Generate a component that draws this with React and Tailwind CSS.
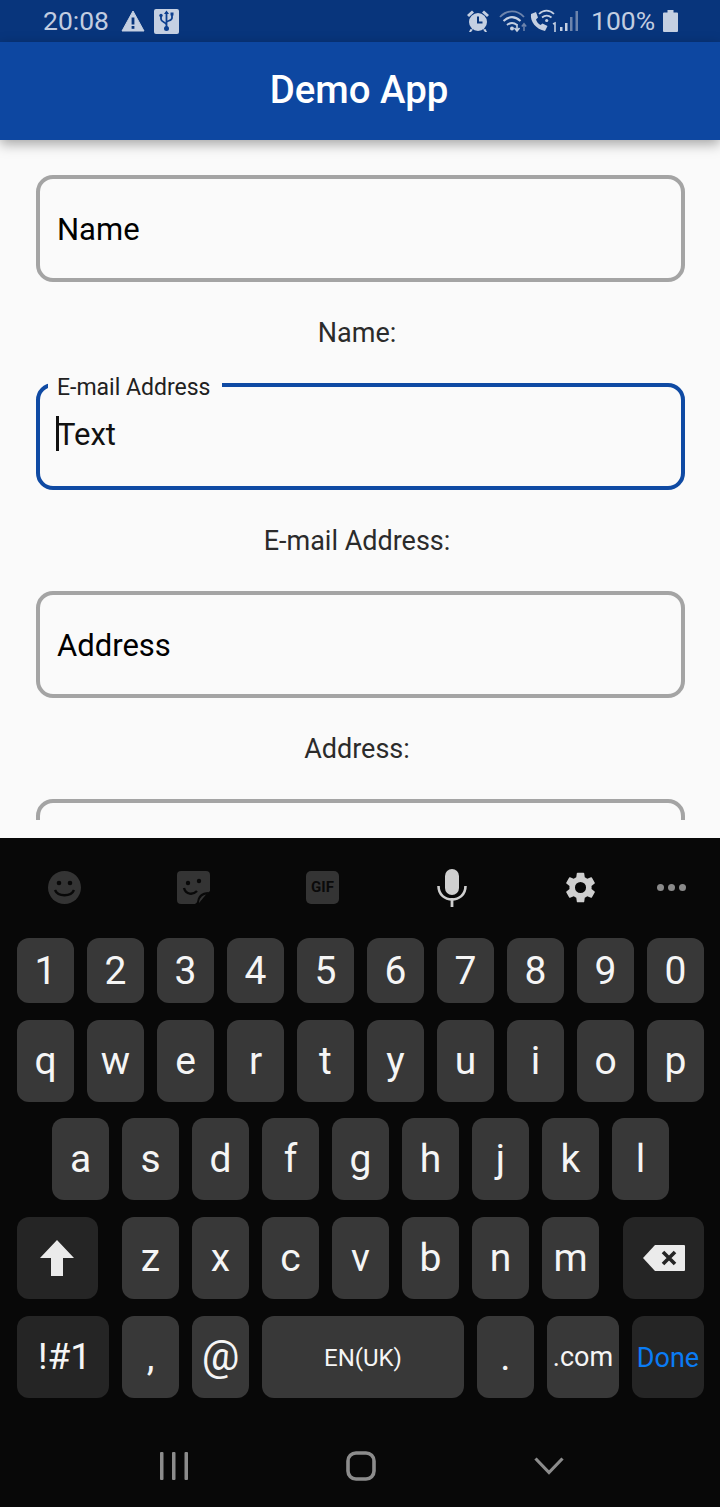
const Field = ({ label, hint }) => (
  <div>
    <div className="h-[107px] border-[4px] border-[#a4a4a4] rounded-[17px] flex items-center pl-[17px] pt-[3px] text-[31px] text-black">{label}</div>
    <div className="h-[101px] flex items-center justify-center pr-[7px] pt-[1px] text-[27px] text-[#2b2b2b]">{hint}</div>
  </div>
);

const FocusedField = () => (
  <div>
    <div className="relative h-[107px] border-[4px] border-[#0f4aa3] rounded-[17px] pl-[17px] pt-[26px] text-[31px] leading-[44px] text-[#111]">
      <span className="absolute left-[8px] -top-[12px] pl-[9px] pr-[12px] bg-[#fafafa] text-[23px] leading-[26px] text-[#212121]">E-mail Address</span>
      <span className="absolute left-[16px] top-[29px] w-[3px] h-[35px] bg-[#111]" />
      Text
    </div>
    <div className="h-[101px] flex items-center justify-center pr-[7px] pt-[1px] text-[27px] text-[#2b2b2b]">E-mail Address:</div>
  </div>
);

const Key = ({ children, className = "w-[57px] bg-[#383838] text-[39px] pt-[1px]" }) => (
  <div className={`h-full rounded-[12px] flex items-center justify-center text-[#f5f5f5] shrink-0 ${className}`}>{children}</div>
);

const Row = ({ keys, className = "pl-[17px]" }) => (
  <div className={`h-[82px] flex gap-[13px] ${className}`}>
    {keys.map(k => <Key key={k}>{k}</Key>)}
  </div>
);

const StatusBar = () => (
  <div className="h-[42px] bg-[#08357c] flex items-center pl-[43px] text-[#c2cde0] text-[26.5px]">
    <span>20:08</span>
    <svg width="24" height="22" viewBox="0 0 24 22" className="ml-[12px]">
      <path d="M12 1 L23 21 H1 Z" fill="#c5d0e2" stroke="#c5d0e2" strokeLinejoin="round" />
      <rect x="10.6" y="7.5" width="2.8" height="7" fill="#08357c" />
      <rect x="10.6" y="16" width="2.8" height="2.8" fill="#08357c" />
    </svg>
    <div className="ml-[9px] w-[25px] h-[25px] bg-[#c5d0e2] rounded-[2px] flex items-center justify-center">
      <svg width="17" height="22" viewBox="0 0 17 22" fill="none" stroke="#0d3f8f" strokeWidth="1.8">
        <path d="M8.5 2 V19 M8.5 15 C8.5 12 3 12.5 3 9 V6 M8.5 12.5 C8.5 10.5 14 11 14 8 V5" />
        <path d="M8.5 0.5 L11 4 H6 Z" fill="#0d3f8f" stroke="none" />
        <circle cx="8.5" cy="18.5" r="2.5" fill="#0d3f8f" stroke="none" />
        <circle cx="3" cy="5.5" r="1.7" fill="#0d3f8f" stroke="none" />
        <rect x="12.5" y="2.5" width="3" height="3" fill="#0d3f8f" stroke="none" />
      </svg>
    </div>
    <svg width="24" height="24" viewBox="0 0 24 24" className="ml-[287px]" fill="#c5d0e2">
      <circle cx="12" cy="13" r="9" />
      <path d="M1 6 L6 1.5 L8 3.5 L3 8 Z M23 6 L18 1.5 L16 3.5 L21 8 Z M4.5 20 L3 23 H5 L7 20.5 Z M19.5 20 L21 23 H19 L17 20.5 Z" />
      <path d="M12 7.5 V13.5 H16.5" stroke="#08357c" strokeWidth="2" fill="none" />
    </svg>
    <svg width="29" height="24" viewBox="0 0 29 24" className="ml-[9px]" fill="none">
      <path d="M1 8 C8 0.5 18 0.5 25 8" stroke="#6d84ac" strokeWidth="1.8" />
      <path d="M4.5 12 C10 7 16 7 21.5 12" stroke="#c5d0e2" strokeWidth="2" />
      <path d="M8 16 C11 13.5 15 13.5 18 16" stroke="#c5d0e2" strokeWidth="2" />
      <circle cx="13" cy="19.5" r="2" fill="#c5d0e2" />
      <path d="M18 15 V21 M15.5 19 L18 22 L20.5 19" stroke="#c5d0e2" strokeWidth="1.6" />
      <path d="M25 22 V15 M22.8 17.5 L25 14.8 L27.2 17.5" stroke="#6d84ac" strokeWidth="1.5" />
    </svg>
    <svg width="29" height="24" viewBox="0 0 29 24" className="ml-[1px]" fill="none">
      <path d="M2 5 C1 13 7 20 16 22 L18.5 17 L13.5 14.5 L11.5 16 C9.5 15 7.5 12.5 7 10.5 L9 8.5 L7 3 Z" fill="#c5d0e2" />
      <path d="M10 5 C14.5 0.5 20.5 0.5 25 5" stroke="#c5d0e2" strokeWidth="1.7" />
      <path d="M13 8.5 C16 6 19.5 6 22.5 8.5" stroke="#c5d0e2" strokeWidth="1.7" />
      <circle cx="17.7" cy="11.5" r="1.6" fill="#c5d0e2" />
      <path d="M24 15 L26 14 V23" stroke="#c5d0e2" strokeWidth="1.6" />
    </svg>
    <svg width="21" height="22" viewBox="0 0 21 22" className="ml-[1px]">
      <rect x="1" y="17" width="2.5" height="4" fill="#c5d0e2" />
      <rect x="6" y="13" width="2.5" height="8" fill="#c5d0e2" />
      <rect x="11" y="7" width="2.5" height="14" fill="#6d84ac" />
      <rect x="16.5" y="1" width="2.5" height="20" fill="#6d84ac" />
    </svg>
    <span className="ml-[11px]">100%</span>
    <svg width="15" height="22" viewBox="0 0 15 22" className="ml-[8px]">
      <path d="M4.5 0 H10.5 V2.5 H14 a1 1 0 0 1 1 1 V21 a1 1 0 0 1 -1 1 H1 a1 1 0 0 1 -1 -1 V3.5 a1 1 0 0 1 1 -1 H4.5 Z" fill="#c5d0e2" />
    </svg>
  </div>
);

const Toolbar = () => (
  <div className="h-[100px] flex items-center pb-[1px] pl-[48px]">
    <svg width="33" height="33" viewBox="0 0 33 33" fill="none">
      <ellipse cx="16.5" cy="16.5" rx="16.5" ry="16.5" fill="#343434" />
      <circle cx="11" cy="12" r="2.3" fill="#080808" />
      <circle cx="22" cy="12" r="2.3" fill="#080808" />
      <path d="M7 19 C10 26 23 26 26 19" stroke="#080808" strokeWidth="2.4" />
    </svg>
    <svg width="33" height="33" viewBox="0 0 33 33" fill="none" className="ml-[96px]">
      <path d="M4 0 H29 a4 4 0 0 1 4 4 V20 L18 33 H4 a4 4 0 0 1 -4 -4 V4 a4 4 0 0 1 4 -4 Z" fill="#343434" />
      <circle cx="11" cy="12" r="2.2" fill="#080808" />
      <circle cx="22" cy="10" r="2.2" fill="#080808" />
      <path d="M7 17 C9 24 16 24 20 20" stroke="#080808" strokeWidth="2.4" />
      <path d="M20 33 C20 25 24 21 32 21 Z" fill="#080808" />
      <path d="M22 32 C22 28 24.5 24.5 29 23.5 Z" fill="#343434" />
    </svg>
    <div className="ml-[96px] w-[33px] h-[33px] rounded-[5px] bg-[#343434] flex items-center justify-center text-[#0a0a0a] text-[15px] font-bold">GIF</div>
    <svg width="30" height="38" viewBox="0 0 30 38" fill="none" className="ml-[98px]">
      <rect x="8" y="0" width="14" height="26" rx="7" fill="#cfcfcf" />
      <path d="M1.5 17 C1.5 35 28.5 35 28.5 17" stroke="#cfcfcf" strokeWidth="2.6" />
      <rect x="13.6" y="29" width="2.8" height="9" fill="#cfcfcf" />
    </svg>
    <svg width="37" height="37" viewBox="0 0 24 24" className="ml-[95px]" fill="#cfcfcf">
      <path d="M19.14 12.94c.04-.3.06-.61.06-.94 0-.32-.02-.64-.07-.94l2.03-1.58a.49.49 0 0 0 .12-.61l-1.92-3.32a.49.49 0 0 0-.59-.22l-2.39.96a7 7 0 0 0-1.62-.94l-.36-2.54a.48.48 0 0 0-.48-.41h-3.84a.48.48 0 0 0-.47.41l-.36 2.54c-.59.24-1.13.57-1.62.94l-2.39-.96a.48.48 0 0 0-.59.22L2.74 8.87a.48.48 0 0 0 .12.61l2.03 1.58c-.05.3-.07.63-.07.94s.02.64.07.94l-2.03 1.58a.49.49 0 0 0-.12.61l1.92 3.32c.12.22.37.29.59.22l2.39-.96c.5.38 1.03.7 1.62.94l.36 2.54c.05.24.24.41.48.41h3.84c.24 0 .44-.17.47-.41l.36-2.54c.59-.24 1.13-.56 1.62-.94l2.39.96c.22.08.47 0 .59-.22l1.92-3.32a.48.48 0 0 0-.12-.61l-2.01-1.58zM12 15.6A3.6 3.6 0 1 1 12 8.4a3.6 3.6 0 0 1 0 7.2z" />
    </svg>
    <div className="ml-[58px] flex gap-[4px]">
      <div className="w-[7px] h-[7px] rounded-full bg-[#8a8a8a]" />
      <div className="w-[7px] h-[7px] rounded-full bg-[#8a8a8a]" />
      <div className="w-[7px] h-[7px] rounded-full bg-[#8a8a8a]" />
    </div>
  </div>
);

const NavBar = () => (
  <div className="flex-1 flex items-center pl-[160px] pt-[27px]">
    <svg width="28" height="28" viewBox="0 0 28 28" fill="#8c8c8c">
      <rect x="0" y="0" width="3.5" height="28" rx="1" />
      <rect x="12" y="0" width="3.5" height="28" rx="1" />
      <rect x="24.5" y="0" width="3.5" height="28" rx="1" />
    </svg>
    <svg width="30" height="30" viewBox="0 0 30 30" fill="none" className="ml-[158px]">
      <rect x="2" y="2" width="26" height="26" rx="8" stroke="#8c8c8c" strokeWidth="3.6" />
    </svg>
    <svg width="30" height="18" viewBox="0 0 30 18" fill="none" className="ml-[158px]">
      <path d="M1.5 1.5 L15 15.5 L28.5 1.5" stroke="#8c8c8c" strokeWidth="3.2" />
    </svg>
  </div>
);

export default function App() {
  return (
    <div className="w-[720px] h-[1507px] overflow-hidden bg-[#fafafa] flex flex-col font-['Roboto',sans-serif]">
      <StatusBar />
      <div className="relative z-10 h-[98px] shrink-0 bg-[#0d47a1] flex items-center justify-center pb-[2px] pr-[2px] text-white text-[38.4px] font-medium shadow-[0_4px_12px_rgba(0,0,0,0.35)]">Demo App</div>
      <div className="h-[680px] shrink-0 overflow-hidden pt-[35px] pl-[36px] pr-[35px]">
        <Field label="Name" hint="Name:" />
        <FocusedField />
        <Field label="Address" hint="Address:" />
        <div className="h-[107px] border-[4px] border-[#a4a4a4] rounded-[17px]" />
      </div>
      <div className="h-[18px] shrink-0" />
      <div className="flex-1 bg-[#080808] flex flex-col">
        <Toolbar />
        <div className="h-[65px] flex gap-[13px] pl-[17px] mb-[17px]">
          {"1234567890".split("").map(k => <Key key={k}>{k}</Key>)}
        </div>
        <Row keys={"qwertyuiop".split("")} />
        <div className="h-[16px]" />
        <Row keys={"asdfghjkl".split("")} className="pl-[52px]" />
        <div className="h-[17px]" />
        <div className="h-[82px] flex gap-[13px] pl-[17px]">
          <Key className="w-[81px] bg-[#252525] mr-[11px] pr-[2px]">
            <svg width="34" height="36" viewBox="0 0 34 36"><path d="M17 0 L34 18 H23 V36 H11 V18 H0 Z" fill="#ebebeb" /></svg>
          </Key>
          {"zxcvbnm".split("").map(k => <Key key={k}>{k}</Key>)}
          <Key className="w-[81px] bg-[#252525] ml-[11px] pb-[1px]">
            <svg width="42" height="26" viewBox="0 0 42 26">
              <path d="M12 0 H41 a1 1 0 0 1 1 1 V25 a1 1 0 0 1 -1 1 H12 L0 13 Z" fill="#ebebeb" />
              <path d="M20 7 L32 19 M32 7 L20 19" stroke="#252525" strokeWidth="3.6" />
            </svg>
          </Key>
        </div>
        <div className="h-[17px]" />
        <div className="h-[82px] flex gap-[13px] pl-[17px]">
          <Key className="w-[92px] bg-[#252525] text-[37px] pl-[3px]">!#1</Key>
          <Key>,</Key>
          <Key className="w-[57px] bg-[#383838] text-[42px] pb-[4px]">@</Key>
          <Key className="w-[202px] bg-[#383838] text-[24px] pt-[1px]">EN(UK)</Key>
          <Key>.</Key>
          <Key className="w-[72px] bg-[#383838] text-[27px] pt-[1px]">.com</Key>
          <Key className="w-[72px] bg-[#252525] text-[27px] pt-[3px] !text-[#0a7cf5]">Done</Key>
        </div>
        <NavBar />
      </div>
    </div>
  );
}
